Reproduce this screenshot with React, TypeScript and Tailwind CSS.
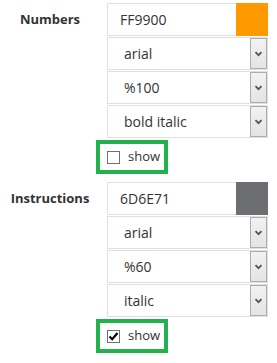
const sections = [
  { label: "Numbers", color: "FF9900", swatch: "bg-[#ff9900]", font: "arial", size: "%100", style: "bold italic", show: false },
  { label: "Instructions", color: "6D6E71", swatch: "bg-[#6d6e71]", font: "arial", size: "%60", style: "italic", show: true },
]

function Chevron() {
  return (
    <svg width="9" height="6" viewBox="0 0 9 6">
      <path d="M1.5 1.2 L4.5 4.2 L7.5 1.2" fill="none" stroke="#555" strokeWidth="1.8" />
    </svg>
  )
}

function SelectBox({ value }: { value: string }) {
  return (
    <div className="flex h-[33px] w-[161px] items-stretch border border-[#e0e0e0] bg-white">
      <div className="flex flex-1 items-center pl-[16px] text-[14px] text-[#333]">{value}</div>
      <div className="flex w-[17px] items-center justify-center border border-[#adadad] bg-gradient-to-b from-[#f2f2f2] to-[#e4e4e4]">
        <Chevron />
      </div>
    </div>
  )
}

function Checkbox({ checked }: { checked: boolean }) {
  return (
    <span className="flex h-[13px] w-[13px] items-center justify-center border border-[#707070] bg-white">
      {checked && (
        <svg width="11" height="11" viewBox="0 0 11 11">
          <path d="M1.5 5.5 L4.2 8.2 L9.5 2" fill="none" stroke="#000" strokeWidth="2.2" />
        </svg>
      )}
    </span>
  )
}

export default function App() {
  return (
    <div className="min-h-[363px] w-[277px] bg-white pt-[3px] font-['Open_Sans',sans-serif]">
      {sections.map((s) => (
        <div key={s.label} className="mb-[8px]">
          <div className="flex">
            <div className="flex h-[33px] w-[100px] items-center justify-center text-[13px] font-bold text-[#333]">
              {s.label}
            </div>
            <div className="ml-[7px] flex flex-col gap-[1px]">
              <div className="flex h-[33px] w-[161px]">
                <div className="flex flex-1 items-center border border-r-0 border-[#e0e0e0] pl-[12px] text-[14px] text-[#333]">
                  {s.color}
                </div>
                <div className={`w-[32px] ${s.swatch}`}></div>
              </div>
              <SelectBox value={s.font} />
              <SelectBox value={s.size} />
              <SelectBox value={s.style} />
            </div>
          </div>
          <div className="ml-[96px] mt-[2px] flex h-[34px] w-[72px] items-center gap-[8px] border-[4px] border-[#22b14c] pl-[7px] text-[13px] text-[#333]">
            <Checkbox checked={s.show} />
            <span>show</span>
          </div>
        </div>
      ))}
    </div>
  )
}
